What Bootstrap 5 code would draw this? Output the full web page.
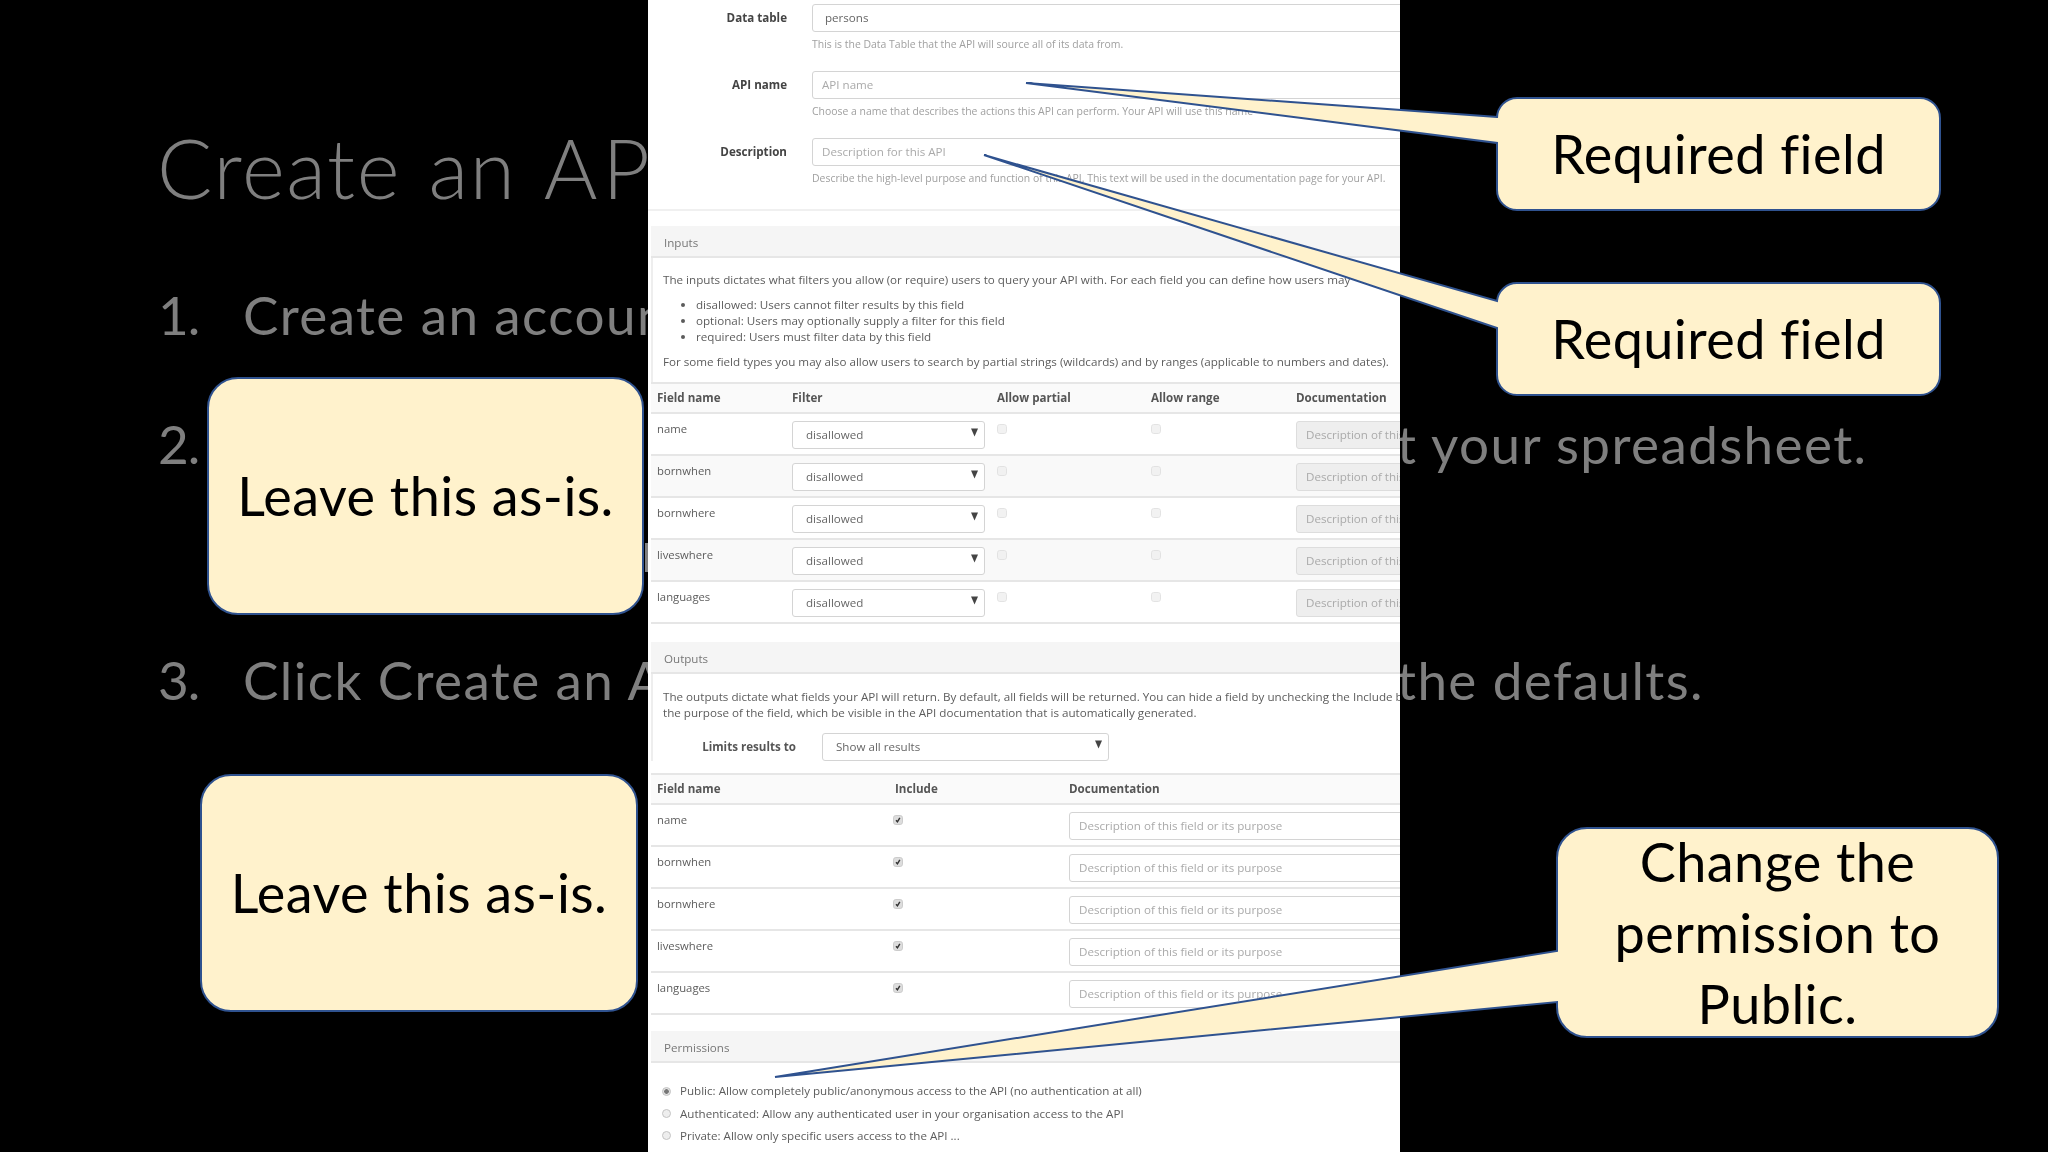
<!DOCTYPE html>
<html lang="en">
<head>
<meta charset="utf-8">
<title>Create an API</title>
<link rel="stylesheet" href="https://cdn.jsdelivr.net/npm/bootstrap@5.3.0/dist/css/bootstrap.min.css">
<style>
html,body{margin:0;background:#000}
.stage{position:relative;width:2048px;height:1152px;background:#000;overflow:hidden}
/* slide text behind the panel */
.sl{position:absolute;white-space:nowrap;color:#7f7f7f;font-family:"Lato","Liberation Sans",sans-serif;line-height:1;font-size:53px;letter-spacing:1.4px}
.sl-title{left:157px;top:126px;font-size:82px;font-weight:300;letter-spacing:1.6px;word-spacing:3.5px}
.wide-ap{letter-spacing:5px}
.l1a{left:158px;top:288px;letter-spacing:-1px}.l1b{left:243px;top:288px}
.l2a{left:158px;top:417px;letter-spacing:-1px}.l2b{left:1397px;top:417px}
.l3a{left:158px;top:653px;letter-spacing:-1px}.l3b{left:243px;top:653px}.l3c{left:1397px;top:653px}
.sliver{position:absolute;left:645px;top:543px;width:3px;height:29px;background:#7f7f7f}
/* screenshot panel */
.shot{position:relative;z-index:1;margin-left:648px;width:752px;height:1152px;background:#fff;overflow:hidden;filter:blur(.45px);font-family:"Open Sans","Liberation Sans",sans-serif;font-size:11.65px;line-height:16px;color:#5c5c5c}
.shot-in{width:1100px;padding-top:4px}
.frow{display:flex;height:67px}
.flabel{width:139px;text-align:right;font-weight:700;color:#444;padding-top:6px;margin-right:25px;font-size:11.6px}
.fbox{width:900px}
.shot .form-control,.shot .form-select{font-size:11.6px;line-height:16px;color:#666;border:1.5px solid #d4d4d4;border-radius:3px;box-shadow:none;padding:3px 9px 5px;height:28px;min-height:0}
.shot .form-control::placeholder{color:#aaa;opacity:1}
.valinput.form-control{padding-left:12px}
.hint{font-size:10.45px;color:#a0a0a0;margin-top:4px;white-space:nowrap}
.rule{height:2px;background:#f0f0f0;margin:4px 0 15px 0}
.shead{margin-left:3px;height:32px;background:#f5f5f5;border-bottom:2px solid #e6e6e6;padding:9px 12px 0 13px;color:#777;font-size:11.6px}
.sbody{margin-left:3px;border-left:2px solid #eee;padding:14px 10px 0;white-space:nowrap}
.sbody p{margin:0}
.sbody ul{margin:9px 0;padding-left:33px}
.gapbot{padding-bottom:12px}
.sbody.gaptop{padding-top:15px}
.gridt{margin:0 0 0 3px;table-layout:fixed;width:1040px;border-collapse:collapse}
.shot .gridt>*>*>*{border-bottom:2px solid #e6e6e6;padding:7px 6px 0;background:transparent;box-shadow:none;color:#5c5c5c;vertical-align:top;font-size:11.3px;line-height:16px}
.shot .gridt thead th{height:30px;background:#fafafa;border-top:2px solid #e6e6e6;color:#555;font-weight:700;padding-top:6px;white-space:nowrap;font-size:11.6px}
.gridt tbody td{height:42px}
.shot .gridt .altrow td{background:#f9f9f9}
.shot .form-select{background-image:url("data:image/svg+xml,%3Csvg xmlns='http://www.w3.org/2000/svg' viewBox='0 0 8 9'%3E%3Cpath d='M0 0h8L4 9z' fill='%23444'/%3E%3C/svg%3E");background-position:right 6px top 6px;background-size:7px 9px;padding:4px 18px 4px 13px;background-color:#fff}
.shot .form-control:disabled{background:#eee;border-color:#ddd}
.pick{width:10px;height:10px;margin:3px 0 0;border:1px solid #ddd;background-color:#f0f0f0;float:none;vertical-align:top}
.incl{margin-left:-2px}
.pick.form-check-input:checked{background-color:#ddd;border-color:#ccc;background-image:url("data:image/svg+xml,%3Csvg xmlns='http://www.w3.org/2000/svg' viewBox='0 0 10 10'%3E%3Cpath d='M2.5 5.2l1.8 2 3-5' fill='none' stroke='%23333' stroke-width='1.8'/%3E%3C/svg%3E");background-size:100%}
.pick.form-check-input:disabled{opacity:.8}
.rad{width:9px;height:9px;margin:0 1px 0 0;border:1px solid #c4c4c4;background-color:#eee}
.rad.form-check-input:checked{background-color:#e2e2e2;border-color:#c4c4c4;background-image:radial-gradient(circle,#777 0 2px,transparent 2.6px)}
.lim{display:flex;align-items:center;margin-top:12px;height:28px;margin-bottom:12px}
.limlab{width:133px;text-align:right;font-weight:700;color:#555;margin-right:26px;font-size:11.6px}
.limsel{width:287px!important}
.permbox{padding-top:17px}
.radrow{display:flex;align-items:center;gap:8px;height:22.4px;padding-left:14px;white-space:nowrap;font-size:11.6px}
.secgap{margin-top:18px}
.secgap2{margin-top:16px}
/* callouts on top */
.overlay{position:absolute;left:0;top:0;z-index:2}
.bub{position:absolute;z-index:3;display:flex;align-items:center;justify-content:center;text-align:center;font-family:"Lato","Liberation Sans",sans-serif;color:#000;font-size:54px;line-height:71px;letter-spacing:.45px}
.b1{left:1497px;top:98px;width:443px;height:112px;padding-bottom:2px}
.b2{left:1497px;top:283px;width:443px;height:112px;padding-bottom:2px}
.b3{left:208px;top:378px;width:435px;height:236px;padding-bottom:2px}
.b4{left:201px;top:775px;width:436px;height:236px;padding-bottom:2px}
.b5{left:1557px;top:828px;width:441px;height:209px}
</style>
</head>
<body>
<div class="stage">
  <div class="sl sl-title">Create an <span class="wide-ap">AP</span>I</div>
  <div class="sl l1a">1.</div><div class="sl l1b">Create an account</div>
  <div class="sl l2a">2.</div><div class="sl l2b">t your spreadsheet.</div>
  <div class="sl l3a">3.</div><div class="sl l3b">Click Create an API</div><div class="sl l3c">the defaults.</div>
  <div class="sliver"></div>

  <div class="shot">
    <div class="shot-in">
      <div class="frow"><div class="flabel">Data table</div><div class="fbox"><input class="form-control valinput" value="persons"><div class="hint">This is the Data Table that the API will source all of its data from.</div></div></div>
      <div class="frow"><div class="flabel">API name</div><div class="fbox"><input class="form-control" placeholder="API name"><div class="hint">Choose a name that describes the actions this API can perform. Your API will use this name</div></div></div>
      <div class="frow"><div class="flabel">Description</div><div class="fbox"><input class="form-control" placeholder="Description for this API"><div class="hint">Describe the high-level purpose and function of this API. This text will be used in the documentation page for your API.</div></div></div>
      <div class="rule"></div>

      <div class="shead">Inputs</div>
      <div class="sbody gapbot">
        <p>The inputs dictates what filters you allow (or require) users to query your API with. For each field you can define how users may</p>
        <ul>
          <li>disallowed: Users cannot filter results by this field</li>
          <li>optional: Users may optionally supply a filter for this field</li>
          <li>required: Users must filter data by this field</li>
        </ul>
        <p>For some field types you may also allow users to search by partial strings (wildcards) and by ranges (applicable to numbers and dates).</p>
      </div>
      <table class="table gridt">
        <colgroup><col style="width:135px"><col style="width:205px"><col style="width:154px"><col style="width:145px"><col></colgroup>
        <thead><tr><th>Field name</th><th>Filter</th><th>Allow partial</th><th>Allow range</th><th>Documentation</th></tr></thead>
        <tbody>
          <tr><td>name</td><td><select class="form-select"><option>disallowed</option></select></td><td><input type="checkbox" class="form-check-input pick" disabled></td><td><input type="checkbox" class="form-check-input pick" disabled></td><td><input class="form-control" disabled placeholder="Description of this field or its purpose"></td></tr>
          <tr class="altrow"><td>bornwhen</td><td><select class="form-select"><option>disallowed</option></select></td><td><input type="checkbox" class="form-check-input pick" disabled></td><td><input type="checkbox" class="form-check-input pick" disabled></td><td><input class="form-control" disabled placeholder="Description of this field or its purpose"></td></tr>
          <tr><td>bornwhere</td><td><select class="form-select"><option>disallowed</option></select></td><td><input type="checkbox" class="form-check-input pick" disabled></td><td><input type="checkbox" class="form-check-input pick" disabled></td><td><input class="form-control" disabled placeholder="Description of this field or its purpose"></td></tr>
          <tr class="altrow"><td>liveswhere</td><td><select class="form-select"><option>disallowed</option></select></td><td><input type="checkbox" class="form-check-input pick" disabled></td><td><input type="checkbox" class="form-check-input pick" disabled></td><td><input class="form-control" disabled placeholder="Description of this field or its purpose"></td></tr>
          <tr><td>languages</td><td><select class="form-select"><option>disallowed</option></select></td><td><input type="checkbox" class="form-check-input pick" disabled></td><td><input type="checkbox" class="form-check-input pick" disabled></td><td><input class="form-control" disabled placeholder="Description of this field or its purpose"></td></tr>
        </tbody>
      </table>

      <div class="shead secgap">Outputs</div>
      <div class="sbody gaptop">
        <p>The outputs dictate what fields your API will return. By default, all fields will be returned. You can hide a field by unchecking the Include box</p>
        <p>the purpose of the field, which be visible in the API documentation that is automatically generated.</p>
        <div class="lim"><div class="limlab">Limits results to</div><select class="form-select limsel"><option>Show all results</option></select></div>
      </div>
      <table class="table gridt">
        <colgroup><col style="width:238px"><col style="width:174px"><col></colgroup>
        <thead><tr><th>Field name</th><th>Include</th><th>Documentation</th></tr></thead>
        <tbody>
          <tr><td>name</td><td><input type="checkbox" class="form-check-input pick incl" checked></td><td><input class="form-control" placeholder="Description of this field or its purpose"></td></tr>
          <tr><td>bornwhen</td><td><input type="checkbox" class="form-check-input pick incl" checked></td><td><input class="form-control" placeholder="Description of this field or its purpose"></td></tr>
          <tr><td>bornwhere</td><td><input type="checkbox" class="form-check-input pick incl" checked></td><td><input class="form-control" placeholder="Description of this field or its purpose"></td></tr>
          <tr><td>liveswhere</td><td><input type="checkbox" class="form-check-input pick incl" checked></td><td><input class="form-control" placeholder="Description of this field or its purpose"></td></tr>
          <tr><td>languages</td><td><input type="checkbox" class="form-check-input pick incl" checked></td><td><input class="form-control" placeholder="Description of this field or its purpose"></td></tr>
        </tbody>
      </table>

      <div class="shead secgap2">Permissions</div>
      <div class="permbox">
        <div class="radrow"><input type="radio" name="perm" class="form-check-input rad" checked><span>Public: Allow completely public/anonymous access to the API (no authentication at all)</span></div>
        <div class="radrow"><input type="radio" name="perm" class="form-check-input rad"><span>Authenticated: Allow any authenticated user in your organisation access to the API</span></div>
        <div class="radrow"><input type="radio" name="perm" class="form-check-input rad"><span>Private: Allow only specific users access to the API ...</span></div>
      </div>
    </div>
  </div>

  <svg class="overlay" width="2048" height="1152" viewBox="0 0 2048 1152" aria-hidden="true">
    <g fill="#fff2cc" stroke="#2f528f" stroke-width="2" stroke-linejoin="miter">
      <path d="M1517 98H1920a20 20 0 0 1 20 20V190a20 20 0 0 1-20 20H1517a20 20 0 0 1-20-20V143L1026 83 1497 117V118a20 20 0 0 1 20-20Z"/>
      <path d="M1517 283H1920a20 20 0 0 1 20 20V375a20 20 0 0 1-20 20H1517a20 20 0 0 1-20-20V328L984 155 1497 301a20 20 0 0 1 20-18Z"/>
      <path d="M238 378H613a30 30 0 0 1 30 30V584a30 30 0 0 1-30 30H238a30 30 0 0 1-30-30V408a30 30 0 0 1 30-30Z"/>
      <path d="M231 775H607a30 30 0 0 1 30 30V981a30 30 0 0 1-30 30H231a30 30 0 0 1-30-30V805a30 30 0 0 1 30-30Z"/>
      <path d="M1587 828H1968a30 30 0 0 1 30 30V1007a30 30 0 0 1-30 30H1587a30 30 0 0 1-30-30V1002L775 1077 1557 951V858a30 30 0 0 1 30-30Z"/>
    </g>
  </svg>
  <div class="bub b1">Required field</div>
  <div class="bub b2">Required field</div>
  <div class="bub b3">Leave this as-is.</div>
  <div class="bub b4">Leave this as-is.</div>
  <div class="bub b5">Change the<br>permission to<br>Public.</div>
</div>
<script src="https://cdn.jsdelivr.net/npm/bootstrap@5.3.0/dist/js/bootstrap.bundle.min.js"></script>
</body>
</html>
